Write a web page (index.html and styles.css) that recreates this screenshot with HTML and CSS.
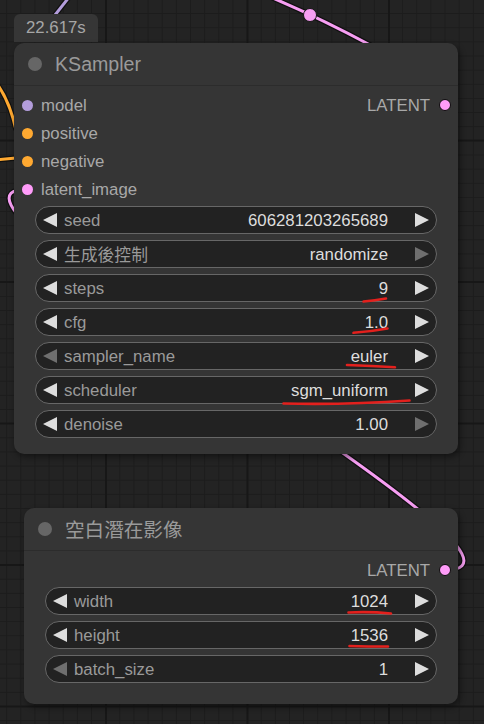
FILE: index.html
```html
<!DOCTYPE html>
<html lang="zh-Hant">
<head>
<meta charset="utf-8">
<title>KSampler</title>
<link rel="stylesheet" href="styles.css">
</head>
<body>
<div class="canvas">
  <svg class="wires" width="484" height="724" viewBox="0 0 484 724">
    <g class="wire-outline">
      <path d="M445 570 C586 570 -113 189 28 189"/>
      <path d="M268 -4 Q318 17 372 46"/>
      <path d="M70 -4 L40 34"/>
      <path d="M-3 84 C6 96 12 112 16 130"/>
      <path d="M-4 160 L16 158"/>
    </g>
    <g class="wire">
      <path class="w-latent" d="M445 570 C586 570 -113 189 28 189"/>
      <path class="w-latent" d="M268 -4 Q318 17 372 46"/>
      <path class="w-model" d="M70 -4 L40 34"/>
      <path class="w-cond" d="M-3 84 C6 96 12 112 16 130"/>
      <path class="w-cond" d="M-4 160 L16 158"/>
    </g>
    <circle class="reroute" cx="310" cy="15" r="6.5"/>
  </svg>

  <div class="badge">22.617s</div>

  <div class="node node-ksampler">
    <div class="title"><span class="title-dot"></span><span class="title-text">KSampler</span></div>
    <div class="slots">
      <div class="slot-row">
        <div class="slot-in"><span class="dot c-model"></span><span class="s-text">model</span></div>
        <div class="slot-out"><span class="s-text">LATENT</span><span class="dot out c-latent"></span></div>
      </div>
      <div class="slot-row"><div class="slot-in"><span class="dot c-cond"></span><span class="s-text">positive</span></div></div>
      <div class="slot-row"><div class="slot-in"><span class="dot c-cond"></span><span class="s-text">negative</span></div></div>
      <div class="slot-row"><div class="slot-in"><span class="dot c-latent"></span><span class="s-text">latent_image</span></div></div>
    </div>
    <div class="widgets">
      <div class="widget">
        <svg class="arrow" viewBox="0 0 14 14"><polygon points="14,0 0,7 14,14"/></svg>
        <span class="w-label">seed</span><span class="w-value">606281203265689</span>
        <svg class="arrow" viewBox="0 0 14 14"><polygon points="0,0 14,7 0,14"/></svg>
      </div>
      <div class="widget">
        <svg class="arrow" viewBox="0 0 14 14"><polygon points="14,0 0,7 14,14"/></svg>
        <span class="w-label cjk">生成後控制</span><span class="w-value">randomize</span>
        <svg class="arrow off" viewBox="0 0 14 14"><polygon points="0,0 14,7 0,14"/></svg>
      </div>
      <div class="widget">
        <svg class="arrow" viewBox="0 0 14 14"><polygon points="14,0 0,7 14,14"/></svg>
        <span class="w-label">steps</span><span class="w-value">9</span>
        <svg class="arrow" viewBox="0 0 14 14"><polygon points="0,0 14,7 0,14"/></svg>
      </div>
      <div class="widget">
        <svg class="arrow" viewBox="0 0 14 14"><polygon points="14,0 0,7 14,14"/></svg>
        <span class="w-label">cfg</span><span class="w-value">1.0</span>
        <svg class="arrow" viewBox="0 0 14 14"><polygon points="0,0 14,7 0,14"/></svg>
      </div>
      <div class="widget">
        <svg class="arrow off" viewBox="0 0 14 14"><polygon points="14,0 0,7 14,14"/></svg>
        <span class="w-label">sampler_name</span><span class="w-value">euler</span>
        <svg class="arrow" viewBox="0 0 14 14"><polygon points="0,0 14,7 0,14"/></svg>
      </div>
      <div class="widget">
        <svg class="arrow" viewBox="0 0 14 14"><polygon points="14,0 0,7 14,14"/></svg>
        <span class="w-label">scheduler</span><span class="w-value">sgm_uniform</span>
        <svg class="arrow" viewBox="0 0 14 14"><polygon points="0,0 14,7 0,14"/></svg>
      </div>
      <div class="widget">
        <svg class="arrow" viewBox="0 0 14 14"><polygon points="14,0 0,7 14,14"/></svg>
        <span class="w-label">denoise</span><span class="w-value">1.00</span>
        <svg class="arrow off" viewBox="0 0 14 14"><polygon points="0,0 14,7 0,14"/></svg>
      </div>
    </div>
  </div>

  <div class="node node-latent">
    <div class="title"><span class="title-dot"></span><span class="title-text">空白潛在影像</span></div>
    <div class="slots">
      <div class="slot-row right">
        <div class="slot-out"><span class="s-text">LATENT</span><span class="dot out c-latent"></span></div>
      </div>
    </div>
    <div class="widgets">
      <div class="widget">
        <svg class="arrow" viewBox="0 0 14 14"><polygon points="14,0 0,7 14,14"/></svg>
        <span class="w-label">width</span><span class="w-value">1024</span>
        <svg class="arrow" viewBox="0 0 14 14"><polygon points="0,0 14,7 0,14"/></svg>
      </div>
      <div class="widget">
        <svg class="arrow" viewBox="0 0 14 14"><polygon points="14,0 0,7 14,14"/></svg>
        <span class="w-label">height</span><span class="w-value">1536</span>
        <svg class="arrow" viewBox="0 0 14 14"><polygon points="0,0 14,7 0,14"/></svg>
      </div>
      <div class="widget">
        <svg class="arrow off" viewBox="0 0 14 14"><polygon points="14,0 0,7 14,14"/></svg>
        <span class="w-label">batch_size</span><span class="w-value">1</span>
        <svg class="arrow" viewBox="0 0 14 14"><polygon points="0,0 14,7 0,14"/></svg>
      </div>
    </div>
  </div>

  <svg class="marks" width="484" height="724" viewBox="0 0 484 724">
    <path d="M363.5 301.5 Q375 300.5 386 298.5"/>
    <path d="M353.5 332.8 Q371 331.5 387.5 328.5"/>
    <path d="M347 365 Q372 366 395 367.3"/>
    <path d="M283.5 403.5 Q345 405 409.5 400.5"/>
    <path d="M348.5 612.5 Q370 611.5 391 613.5"/>
    <path d="M349.5 646 Q368 646.5 388 646.5"/>
  </svg>
</div>
</body>
</html>
```

FILE: styles.css
```css
html, body {
  margin: 0;
  padding: 0;
  background: #222222;
}

.canvas {
  position: relative;
  width: 484px;
  height: 724px;
  overflow: hidden;
  font-family: "Liberation Sans", "Noto Sans CJK TC", sans-serif;
  background-color: #232323;
  background-image:
    linear-gradient(to right, #171717 2px, transparent 2px),
    linear-gradient(to bottom, #171717 2px, transparent 2px),
    linear-gradient(to right, #1c1c1c 1px, transparent 1px),
    linear-gradient(to bottom, #1c1c1c 1px, transparent 1px);
  background-size:
    141.5px 100%,
    100% 141.5px,
    14.15px 100%,
    100% 14.15px;
  background-position:
    105px 0,
    0 139.5px,
    6.2px 0,
    0 13.1px;
}

.wires, .marks {
  position: absolute;
  left: 0;
  top: 0;
  pointer-events: none;
}

.wire-outline path {
  fill: none;
  stroke: #101010;
  stroke-width: 5.5;
}

.wire path {
  fill: none;
  stroke-width: 3;
}

.w-latent { stroke: #f79ef3; }
.w-model { stroke: #b39ddb; }
.w-cond { stroke: #ffa931; }

.reroute {
  fill: #f79ef3;
  stroke: #151515;
  stroke-width: 1;
}

.marks path {
  fill: none;
  stroke: #e3201d;
  stroke-width: 2.6;
  stroke-linecap: round;
}

.badge {
  position: absolute;
  left: 14px;
  top: 14px;
  height: 28px;
  line-height: 28px;
  padding: 0 12px;
  background: #363636;
  border-radius: 6px 6px 0 0;
  color: #a6a6a6;
  font-size: 16.8px;
}

.node {
  position: absolute;
  background: #353535;
  border-radius: 10px;
  box-shadow: 2px 3px 6px rgba(0, 0, 0, 0.45);
  display: flex;
  flex-direction: column;
}

.node-ksampler {
  left: 14px;
  top: 43px;
  width: 444px;
  padding-bottom: 16px;
}

.node-latent {
  left: 24px;
  top: 508px;
  width: 434px;
  padding-bottom: 21px;
}

.title {
  height: 42px;
  display: flex;
  align-items: center;
  padding-left: 14px;
  border-bottom: 1px solid #2c2c2c;
}

.title-dot {
  width: 14px;
  height: 14px;
  border-radius: 50%;
  background: #666666;
}

.title-text {
  margin-left: 13px;
  font-size: 19.6px;
  color: #9a9a9a;
}

.node-latent .title-text {
  margin-left: 13px;
  padding-bottom: 2px;
}

.slots {
  padding-top: 5px;
  display: flex;
  flex-direction: column;
}

.slot-row {
  height: 28px;
  display: flex;
  align-items: center;
  justify-content: space-between;
}

.slot-row.right {
  justify-content: flex-end;
}

.slot-in, .slot-out {
  display: flex;
  align-items: center;
  font-size: 16.8px;
  color: #a8a8a8;
}

.s-text {
  padding-top: 2px;
}

.slot-in {
  padding-left: 8px;
  gap: 8px;
}

.slot-out {
  padding-right: 7px;
  gap: 9px;
}

.dot {
  width: 11px;
  height: 11px;
  border-radius: 50%;
  box-sizing: border-box;
}

.dot.out {
  width: 12px;
  height: 12px;
  border: 1.5px solid #0c0c0c;
}

.c-model { background: #b39ddb; }
.c-cond { background: #ffa931; }
.c-latent { background: #ff9cf9; }

.widgets {
  margin-top: 3px;
  padding: 0 21px;
  display: flex;
  flex-direction: column;
  gap: 6px;
}

.widget {
  height: 28px;
  box-sizing: border-box;
  border: 1px solid #676767;
  border-radius: 14px;
  background: #222222;
  display: flex;
  align-items: center;
  padding: 0 7px;
  font-size: 16.8px;
}

.arrow {
  width: 14px;
  height: 14px;
  flex: none;
  fill: #dddddd;
}

.arrow.off {
  fill: #6f6f6f;
}

.w-label {
  flex: 1;
  margin-left: 7px;
  padding-top: 2px;
  color: #9a9a9a;
  white-space: nowrap;
}

.w-label.cjk {
  padding-top: 0;
}

.w-value {
  margin-right: 27px;
  padding-top: 2px;
  color: #dddddd;
  white-space: nowrap;
}
```
